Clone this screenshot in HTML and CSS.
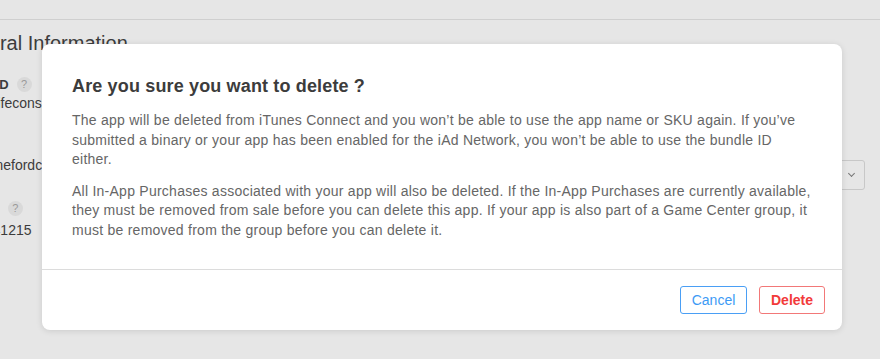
FILE: index.html
```html
<!DOCTYPE html>
<html lang="en">
<head>
    <meta charset="UTF-8">
    <title>Delete App</title>
    <link rel="stylesheet" href="styles.css">
</head>
<body>
    <div class="page">
        <div class="top-bar"></div>
        <div class="content">
            <h2 class="section-title">General Information</h2>
            <div class="row row-bundle">
                <div class="field-label">Bundle ID <span class="help">?</span></div>
                <div class="field-value">com.lifeconsult</div>
            </div>
            <div class="row row-name">
                <div class="field-value">homefordcare</div>
                <div class="select-box"><span class="chevron"></span></div>
            </div>
            <div class="row row-apple">
                <div class="field-label">Apple ID <span class="help">?</span></div>
                <div class="field-value">9841215</div>
            </div>
        </div>
    </div>

    <!-- 删除确认框 -->
    <div class="overlay">
        <div class="modal">
            <div class="modal-body">
                <h3 class="modal-title">Are you sure you want to delete ?</h3>
                <p>The app will be deleted from iTunes Connect and you won’t be able to use the app name or SKU again. If you’ve submitted a binary or your app has been enabled for the iAd Network, you won’t be able to use the bundle ID either.</p>
                <p>All In-App Purchases associated with your app will also be deleted. If the In-App Purchases are currently available, they must be removed from sale before you can delete this app. If your app is also part of a Game Center group, it must be removed from the group before you can delete it.</p>
            </div>
            <div class="modal-footer">
                <button class="btn btn-cancel">Cancel</button>
                <button class="btn btn-delete">Delete</button>
            </div>
        </div>
    </div>
</body>
</html>
```

FILE: styles.css
```css
*{
    margin: 0;
    padding: 0;
    box-sizing: border-box;
}
body{
    background: #e6e6e6;
    font-family: "Helvetica Neue", "Liberation Sans", Arial, sans-serif;
    color: #333;
    width: 880px;
    height: 359px;
    overflow: hidden;
    position: relative;
}
.page{
    height: 100%;
}
.top-bar{
    height: 20px;
    border-bottom: 1px solid #cfcfcf;
}
/* 背景表单 */
.content{
    padding: 11px 15px 0 0;
    color: #3c3c3c;
}
.section-title{
    margin-left: -49px;
    font-size: 20px;
    font-weight: 300;
    line-height: 24px;
    white-space: nowrap;
}
.row{
    white-space: nowrap;
}
.field-label{
    display: flex;
    align-items: center;
    gap: 8px;
    height: 16px;
    font-size: 13px;
    font-weight: bold;
}
.field-value{
    font-size: 14px;
    line-height: 20px;
}
.help{
    display: inline-block;
    width: 15px;
    height: 15px;
    border-radius: 50%;
    background: #d9d9d9;
    color: #999;
    font-size: 11px;
    font-weight: normal;
    text-align: center;
    line-height: 15px;
}
.row-bundle{
    margin-top: 21px;
}
.row-bundle .field-label{
    margin-left: -52px;
}
.row-bundle .field-value{
    margin-top: 1px;
    margin-left: -36px;
}
.row-name{
    display: flex;
    align-items: flex-start;
    margin-top: 42px;
}
.row-name .field-value{
    margin-left: -24px;
}
.select-box{
    margin-left: auto;
    margin-top: 5px;
    width: 65px;
    height: 30px;
    border: 1px solid #c8c8c8;
    border-radius: 3px;
    position: relative;
}
.chevron{
    position: absolute;
    right: 10px;
    top: 10px;
    width: 5px;
    height: 5px;
    border-right: 1px solid #777;
    border-bottom: 1px solid #777;
    transform: rotate(45deg);
}
.row-apple{
    margin-top: 10px;
}
.row-apple .field-label{
    margin-left: -53px;
}
.row-apple .field-value{
    margin-top: 4px;
    margin-left: -23px;
}
/* 弹窗 */
.overlay{
    position: absolute;
    left: 0;
    top: 0;
    right: 0;
    bottom: 0;
}
.modal{
    position: absolute;
    left: 42px;
    top: 44px;
    width: 800px;
    height: 286px;
    background: #fff;
    border-radius: 8px;
    box-shadow: 0 1px 6px rgba(0, 0, 0, 0.12);
}
.modal-body{
    padding: 31px 30px 30px;
    height: 226px;
    border-bottom: 1px solid #dcdcdc;
}
.modal-title{
    font-size: 18px;
    line-height: 22px;
    font-weight: bold;
    letter-spacing: 0.15px;
    color: #3c3c3c;
    margin-bottom: 14px;
}
.modal-body p{
    font-size: 14px;
    line-height: 19.5px;
    letter-spacing: 0.25px;
    color: #666;
    margin-bottom: 12px;
}
.modal-footer{
    display: flex;
    justify-content: flex-end;
    align-items: center;
    gap: 12px;
    height: 59px;
    padding-right: 17px;
}
.btn{
    height: 28px;
    font-family: inherit;
    font-size: 14px;
    background: #fff;
    border-radius: 3px;
    cursor: pointer;
}
.btn-cancel{
    width: 67px;
    color: #3d9af5;
    border: 1px solid #4a9ff5;
}
.btn-delete{
    width: 66px;
    color: #f23a3a;
    font-weight: bold;
    border: 1px solid #f27878;
}
```
